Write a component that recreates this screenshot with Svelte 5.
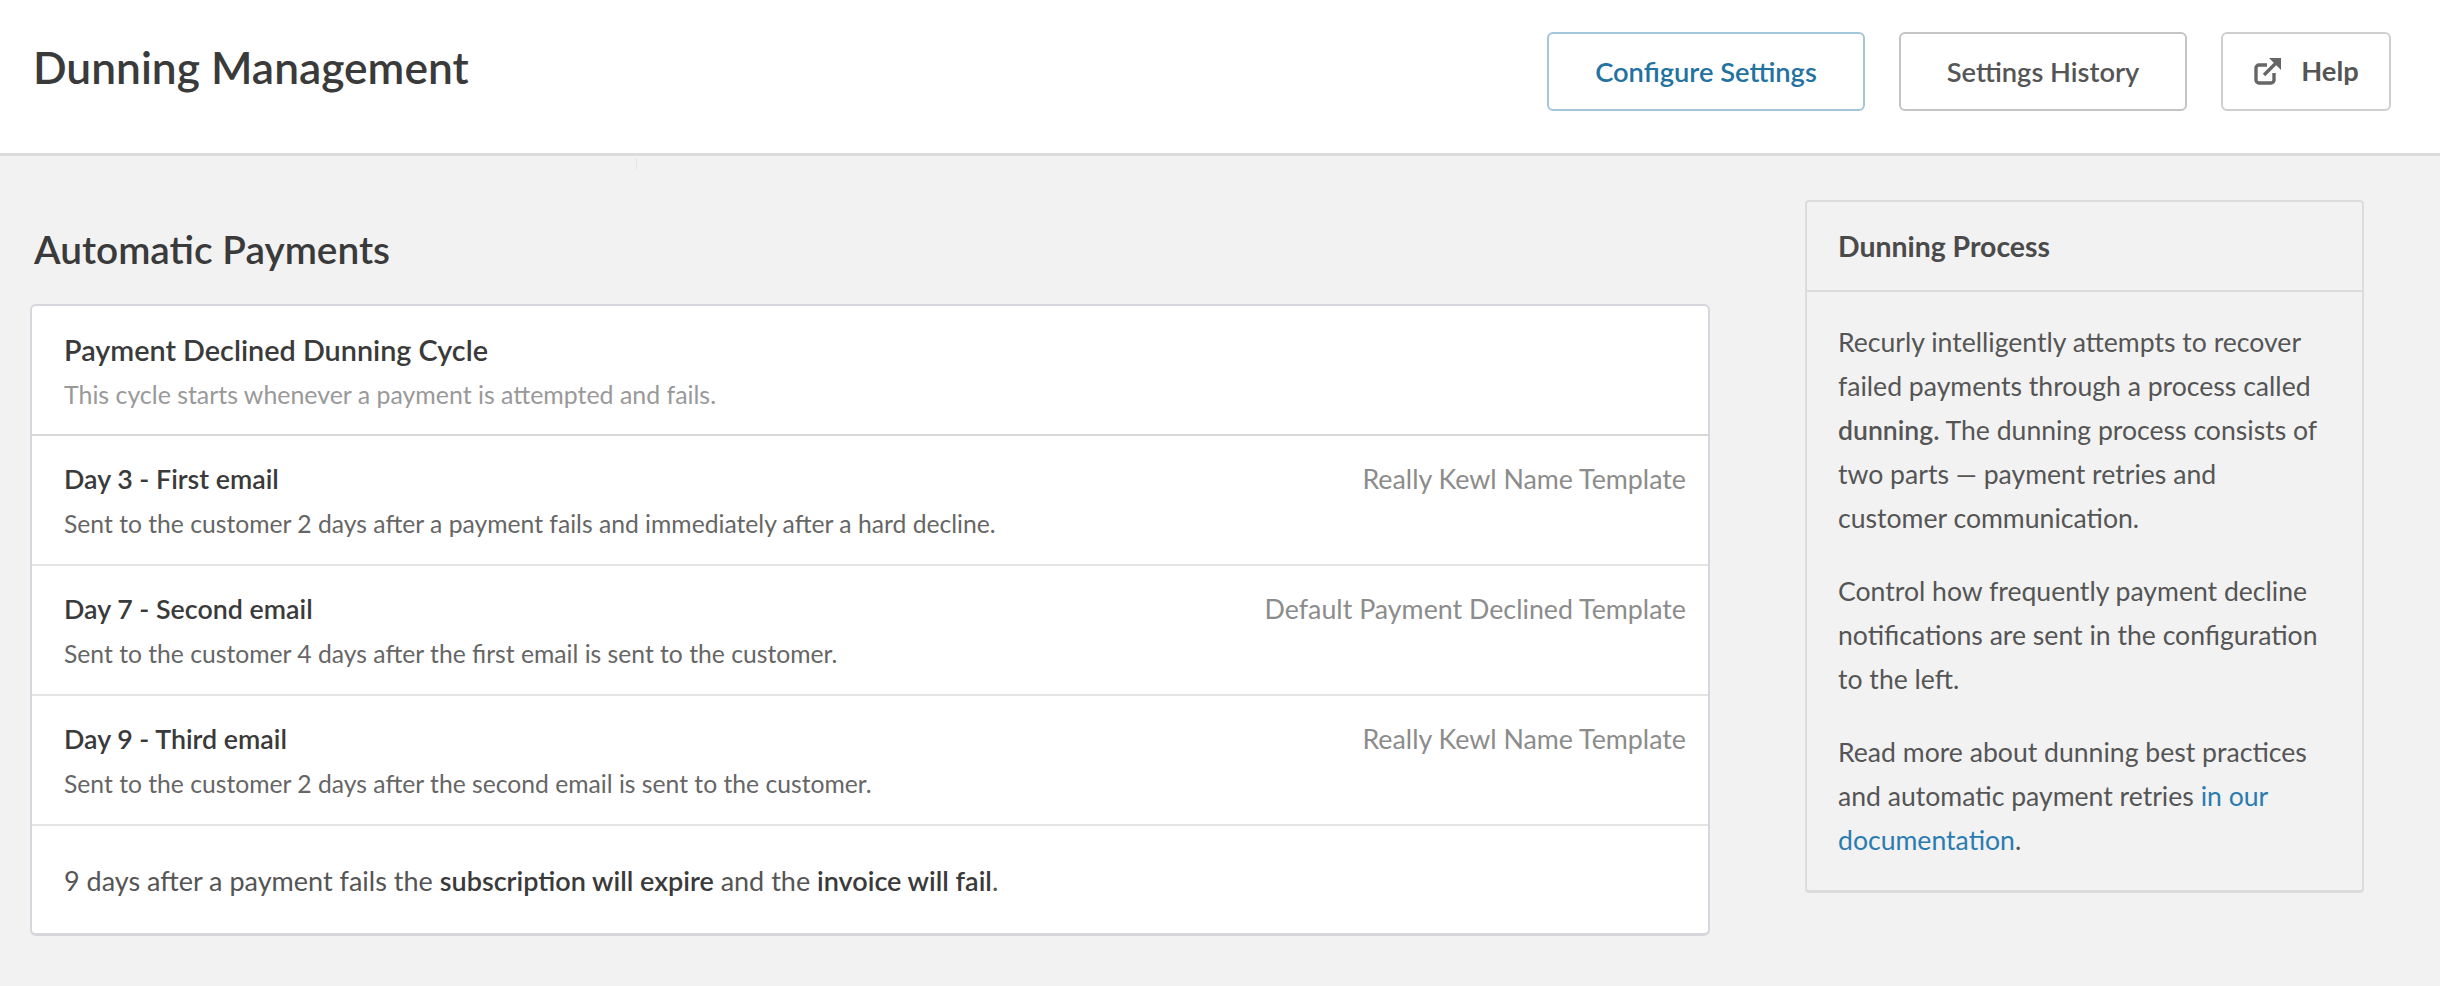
<script lang="ts">
    type Step = { day: string; desc: string; template: string };
    const steps: Step[] = [
        { day: "Day 3 - First email", desc: "Sent to the customer 2 days after a payment fails and immediately after a hard decline.", template: "Really Kewl Name Template" },
        { day: "Day 7 - Second email", desc: "Sent to the customer 4 days after the first email is sent to the customer.", template: "Default Payment Declined Template" },
        { day: "Day 9 - Third email", desc: "Sent to the customer 2 days after the second email is sent to the customer.", template: "Really Kewl Name Template" },
    ];
</script>

<div class="page">
    <header class="top">
        <h1>Dunning Management</h1>
        <div class="actions">
            <button class="btn primary">Configure Settings</button>
            <button class="btn history">Settings History</button>
            <button class="btn help">
                <svg width="30" height="30" viewBox="0 0 30 30" fill="none" stroke="#666" stroke-width="3.4">
                    <path d="M21 17v7a3 3 0 0 1-3 3H6a3 3 0 0 1-3-3V12a3 3 0 0 1 3-3h8" />
                    <path d="M11 19 24 6" />
                    <path d="M16 2h12v12z" fill="#666" stroke="none" />
                </svg>
                Help
            </button>
        </div>
    </header>
    <span class="tick"></span>

    <main class="content">
        <section class="left">
            <h2>Automatic Payments</h2>
            <div class="card">
                <div class="cycle">
                    <div class="cycle-title">Payment Declined Dunning Cycle</div>
                    <div class="cycle-sub">This cycle starts whenever a payment is attempted and fails.</div>
                </div>
                {#each steps as s}
                    <div class="step">
                        <div>
                            <div class="step-title">{s.day}</div>
                            <div class="step-desc">{s.desc}</div>
                        </div>
                        <div class="template">{s.template}</div>
                    </div>
                {/each}
                <div class="outcome">
                    9 days after a payment fails the <b>subscription will expire</b> and the <b>invoice will fail</b>.
                </div>
            </div>
        </section>

        <aside class="side">
            <div class="side-head">Dunning Process</div>
            <div class="side-body">
                <p>Recurly intelligently attempts to recover failed payments through a process called <b>dunning.</b> The dunning process consists of two parts — payment retries and customer communication.</p>
                <p>Control how frequently payment decline notifications are sent in the configuration to the left.</p>
                <p>Read more about dunning best practices and automatic payment retries <a href="#docs">in our documentation</a>.</p>
            </div>
        </aside>
    </main>
</div>

<style>
    :global(body) {
        margin: 0;
        background: #f2f2f2;
        font-family: "Lato", "Open Sans", sans-serif;
        color: #555;
    }
    .page { position: relative; min-height: 986px; background: #f2f2f2; }
    .top {
        box-sizing: border-box;
        height: 156px;
        background: #fff;
        border-bottom: 3px solid #dcdcdc;
        display: flex;
        align-items: flex-start;
        justify-content: space-between;
        padding: 32px 49px 0 33px;
    }
    h1 {
        margin: 8px 0 0;
        font-size: 44.3px;
        line-height: 54px;
        font-weight: 600;
        color: #3a3a3a;
    }
    .actions { display: flex; gap: 34px; }
    .btn {
        box-sizing: border-box;
        height: 79px;
        background: #fff;
        border: 2px solid #c4c4c4;
        border-radius: 6px;
        font-family: inherit;
        font-size: 27.3px;
        font-weight: 600;
        color: #555;
        padding: 0;
    }
    .primary { width: 318px; color: #23729f; border-color: #a3c6dc; }
    .history { width: 288px; }
    .help {
        width: 170px;
        border-color: #cfcfcf;
        display: flex;
        align-items: center;
        justify-content: center;
        gap: 18px;
        padding-bottom: 2px;
        font-weight: 700;
    }
    .tick {
        position: absolute;
        left: 636px;
        top: 158px;
        width: 1px;
        height: 12px;
        background: #e6e6e6;
    }
    .content {
        display: grid;
        grid-template-columns: 1680px 559px;
        column-gap: 94px;
        padding: 44px 76px 0 30px;
        align-items: start;
    }
    h2 {
        margin: 23px 0 29px 4px;
        font-size: 38.8px;
        line-height: 52px;
        font-weight: 600;
        color: #3a3a3a;
    }
    .card {
        background: #fff;
        border: 2px solid #d6d6dc;
        border-bottom-width: 3px;
        border-radius: 6px;
        font-size: 26px;
    }
    .cycle {
        box-sizing: border-box;
        height: 130px;
        padding: 24px 32px 0;
        border-bottom: 2px solid #d8d8d8;
    }
    .cycle-title { font-size: 28.8px; line-height: 40px; font-weight: 600; color: #3a3a3a; }
    .cycle-sub { margin-top: 6px; line-height: 36px; color: #999; font-size: 24.9px; }
    .step {
        box-sizing: border-box;
        height: 130px;
        padding: 23px 22px 0 32px;
        border-bottom: 2px solid #e4e4e4;
        display: flex;
        justify-content: space-between;
    }
    .step-title { font-size: 26.8px; line-height: 40px; font-weight: 600; color: #3a3a3a; }
    .step-desc { margin-top: 7px; line-height: 36px; font-size: 24.7px; color: #666; }
    .template { line-height: 40px; font-size: 26.8px; color: #8c8c8c; }
    .outcome { box-sizing: border-box; height: 107px; padding: 37px 32px 0; line-height: 36px; font-size: 27px; color: #555; }
    .outcome b { color: #3a3a3a; font-weight: 600; }
    .side {
        border: 2px solid #dcdcdc;
        border-bottom-width: 3px;
        border-radius: 4px;
        margin-left: 1px;
        margin-right: -1px;
    }
    .side-head {
        box-sizing: border-box;
        height: 90px;
        padding: 24px 31px 0;
        font-size: 28.4px;
        line-height: 40px;
        font-weight: 700;
        color: #4a4a4a;
        border-bottom: 2px solid #dcdcdc;
    }
    .side-body { padding: 28px 38px 28px 31px; font-size: 26.6px; line-height: 44px; color: #555; }
    .side-body p { margin: 0 0 29px; }
    .side-body p:last-child { margin-bottom: 0; }
    .side-body a { color: #2a7cb0; text-decoration: none; }
    .side-body b { font-weight: 600; }
</style>
